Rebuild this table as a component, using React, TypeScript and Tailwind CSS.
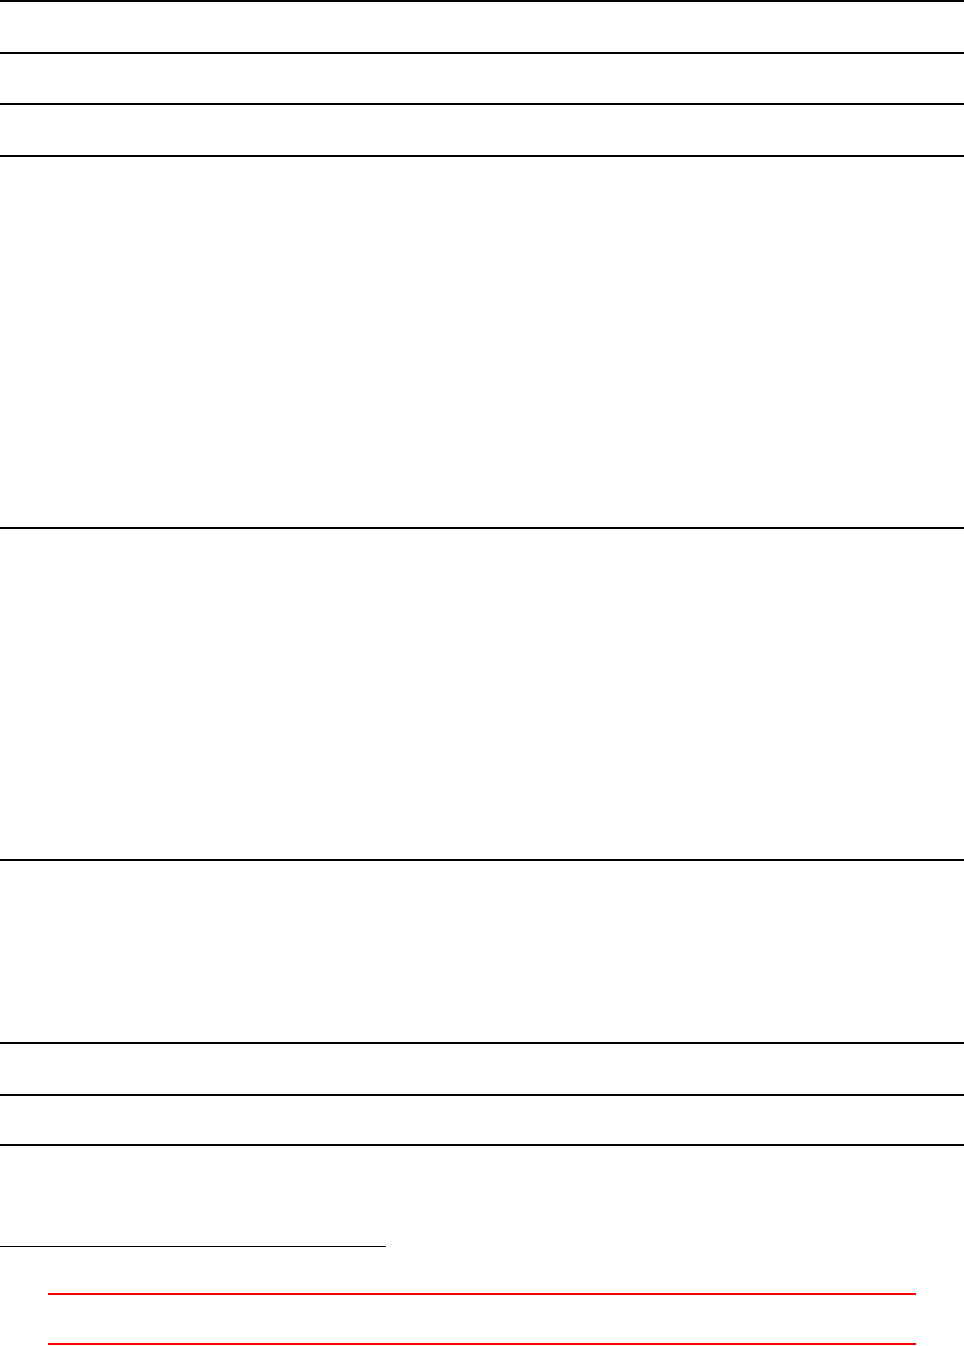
const rows = [
  { id: 'r1', h: 'h-[52px]' },
  { id: 'r2', h: 'h-[51px]' },
  { id: 'r3', h: 'h-[52px]' },
  { id: 'r4', h: 'h-[372px]' },
  { id: 'r5', h: 'h-[332px]' },
  { id: 'r6', h: 'h-[183px]' },
  { id: 'r7', h: 'h-[52px]' },
  { id: 'r8', h: 'h-[50px]' },
];

export default function App() {
  return (
    <div className="min-h-[1346px] w-full bg-white" style={{ fontFamily: '"Liberation Sans", Arial, sans-serif' }}>
      <div className="flex flex-col">
        {rows.map((row) => (
          <div key={row.id} className={`${row.h} border-t-2 border-black`} />
        ))}
        <div className="h-[102px] border-t-2 border-black" />
      </div>

      {/* footnote rule */}
      <div className="w-[386px] border-t border-black" />

      <div className="mx-[48px] mt-[46px] flex flex-col">
        <div className="h-[50px] border-t-2 border-[#ff0000]" />
        <div className="border-t-2 border-[#ff0000]" />
      </div>
    </div>
  );
}
